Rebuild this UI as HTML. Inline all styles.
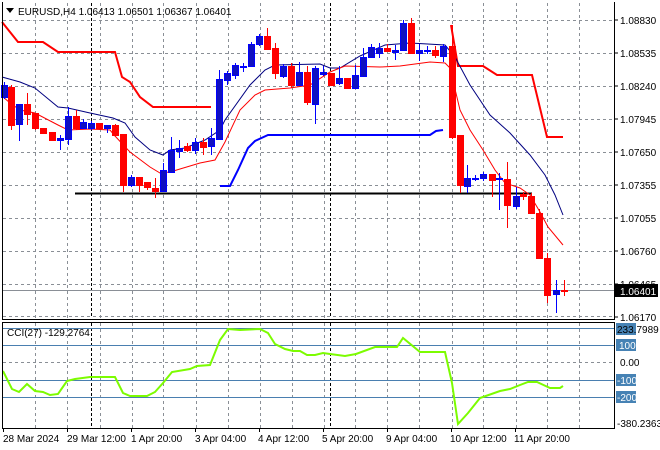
<!DOCTYPE html>
<html><head><meta charset="utf-8"><style>
html,body{margin:0;padding:0;background:#fff;width:660px;height:450px;overflow:hidden}
svg{display:block}
text{font-family:"Liberation Sans",sans-serif;font-size:10px;fill:#000}
</style></head><body>
<svg width="660" height="450" viewBox="0 0 660 450" xmlns="http://www.w3.org/2000/svg">
<rect width="660" height="450" fill="#fff"/>
<g stroke="#8a8f96" stroke-width="1" stroke-dasharray="3,3" fill="none">
<path d="M3 20.5H614M3 53.5H614M3 86.5H614M3 119.5H614M3 152.5H614M3 185.5H614M3 218.5H614M3 251.5H614M3 284.5H614M3 316.5H614"/>
<path d="M35.5 3V318M67.5 3V318M100.5 3V318M132.5 3V318M163.5 3V318M196.5 3V318M228.5 3V318M260.5 3V318M292.5 3V318M324.5 3V318M355.5 3V318M387.5 3V318M419.5 3V318M452.5 3V318M483.5 3V318M516.5 3V318M547.5 3V318M579.5 3V318"/>
<path d="M35.5 323V428M67.5 323V428M100.5 323V428M132.5 323V428M163.5 323V428M196.5 323V428M228.5 323V428M260.5 323V428M292.5 323V428M324.5 323V428M355.5 323V428M387.5 323V428M419.5 323V428M452.5 323V428M483.5 323V428M516.5 323V428M547.5 323V428M579.5 323V428"/>
<path d="M3 362.5H614"/>
</g>
<g stroke="#000" stroke-width="1" stroke-dasharray="3,2"><path d="M91.5 3V318M91.5 323V428M330.5 3V318M330.5 323V428"/></g>
<g stroke="#4a7fb0" stroke-width="1"><path d="M3 328.5H614M3 345.5H614M3 380.5H614M3 397.5H614"/></g>
<path d="M3 290.5H614" stroke="#8a8f96"/>
<path d="M75 193.5H532" stroke="#000" stroke-width="2"/>
<polyline fill="none" stroke="#ff0000" stroke-width="2" points="2,22 18,42 43,42 58,52 115,52 122,77 130,82 140,97 153,107 211,107"/>
<polyline fill="none" stroke="#ff0000" stroke-width="2" points="451,25 458,66 483,66 497,75 532,75 547,137 563,137"/>
<polyline fill="none" stroke="#0000ff" stroke-width="2" points="220,186 230,186 238,170 248,148 255,141 268,135 330,135 430,135 436,131 443,130"/>
<polyline fill="none" stroke="#000080" stroke-width="1" points="2,77 20,82 35,88 58,107 68,108 90,113 113,118 125,123 135,137 150,150 163,155 170,150 185,148 205,140 220,130 225,120 250,85 265,70 275,65 320,64 330,68 340,68 360,56 385,45 410,43 445,45 455,57 470,85 490,115 510,133 530,155 545,175 555,195 563,215"/>
<polyline fill="none" stroke="#ff0000" stroke-width="1" points="2,96 10,103 20,110 35,113 58,125 68,130 90,129 110,130 115,136 130,152 150,167 160,173 170,172 200,163 215,160 225,142 240,110 255,95 265,90 290,88 310,85 330,72 345,66 380,67 400,66 430,62 445,63 450,68 460,110 470,130 483,150 495,170 505,183 520,188 530,195 540,212 548,227 563,245"/>
<g stroke-width="1">
<g fill="#0000ff" stroke="#0000ff">
<path d="M4.5 82V99M19.5 104V141M60.5 135V150M68.5 107V145M83.5 119V128M91.5 121V130M107.5 125V133M131.5 175V187M163.5 163V191M171.5 137V172M179.5 140V158M195.5 138V154M211.5 128V155M219.5 70V139M227.5 71V85M235.5 63V79M243.5 63V72M251.5 42V66M259.5 34V46M283.5 64V78M299.5 62V85M315.5 66V124M323.5 66V76M339.5 66V85M355.5 65V89M363.5 48V77M371.5 44V58M379.5 43V58M395.5 45V60M403.5 20V51M419.5 44V61M427.5 46V54M443.5 44V62M467.5 165V193M475.5 175V181M483.5 172V181M499.5 173V210M516.5 187V209M556.5 280V313"/>
</g>
<g fill="#1010c0" stroke="#0000ff">
<rect x="1.5" y="85.5" width="6" height="12"/>
<rect x="16.5" y="104.5" width="6" height="20"/>
<rect x="57.5" y="138.5" width="6" height="2"/>
<rect x="65.5" y="116.5" width="6" height="23"/>
<rect x="80.5" y="122.5" width="6" height="6"/>
<rect x="88.5" y="123.5" width="6" height="5"/>
<rect x="104.5" y="125.5" width="6" height="3"/>
<rect x="128.5" y="177.5" width="6" height="8"/>
<rect x="160.5" y="170.5" width="6" height="21"/>
<rect x="168.5" y="150.5" width="6" height="22"/>
<rect x="176.5" y="148.5" width="6" height="3"/>
<rect x="192.5" y="142.5" width="6" height="8"/>
<rect x="208.5" y="138.5" width="6" height="8"/>
<rect x="216.5" y="79.5" width="6" height="60"/>
<rect x="224.5" y="73.5" width="6" height="7"/>
<rect x="232.5" y="65.5" width="6" height="10"/>
<rect x="240.5" y="66.5" width="6" height="1"/>
<rect x="248.5" y="44.5" width="6" height="22"/>
<rect x="256.5" y="36.5" width="6" height="8"/>
<rect x="280.5" y="66.5" width="6" height="10"/>
<rect x="296.5" y="72.5" width="6" height="13"/>
<rect x="312.5" y="68.5" width="6" height="36"/>
<rect x="320.5" y="72.5" width="6" height="2"/>
<rect x="336.5" y="78.5" width="6" height="5"/>
<rect x="352.5" y="75.5" width="6" height="13"/>
<rect x="360.5" y="57.5" width="6" height="19"/>
<rect x="368.5" y="47.5" width="6" height="10"/>
<rect x="376.5" y="48.5" width="6" height="5"/>
<rect x="392.5" y="50.5" width="6" height="2"/>
<rect x="400.5" y="23.5" width="6" height="27"/>
<rect x="416.5" y="50.5" width="6" height="3"/>
<rect x="424.5" y="50.5" width="6" height="1"/>
<rect x="440.5" y="46.5" width="6" height="10"/>
<rect x="464.5" y="178.5" width="6" height="8"/>
<rect x="472.5" y="178.5" width="6" height="1"/>
<rect x="480.5" y="174.5" width="6" height="4"/>
<rect x="496.5" y="178.5" width="6" height="1"/>
<rect x="513.5" y="196.5" width="6" height="10"/>
<rect x="553.5" y="290.5" width="6" height="4"/>
</g>
<g stroke="#ff0000" fill="#ff0000">
<path d="M11.5 85V130M27.5 93V125M35.5 113V130M52.5 132V141M76.5 110V130M99.5 123V128M115.5 124V135M123.5 134V192M139.5 177V192M147.5 182V190M155.5 178V198M187.5 143V152M203.5 138V155M267.5 28V49M275.5 43V79M291.5 63V88M307.5 66V105M331.5 73V85M347.5 78V88M387.5 44V51M411.5 18V54M435.5 46V58M452.5 25V139M460.5 135V193M492.5 174V197M507.5 162V228M523.5 192V200M531.5 193V214M539.5 209V258M547.5 253V303M564.5 280V296"/>
<rect x="8.5" y="87.5" width="6" height="38"/>
<rect x="24.5" y="104.5" width="6" height="10"/>
<rect x="32.5" y="113.5" width="6" height="15"/>
<rect x="40.5" y="128.5" width="6" height="5"/>
<rect x="49.5" y="132.5" width="6" height="8"/>
<rect x="73.5" y="116.5" width="6" height="12"/>
<rect x="96.5" y="123.5" width="6" height="5"/>
<rect x="112.5" y="125.5" width="6" height="10"/>
<rect x="120.5" y="134.5" width="6" height="51"/>
<rect x="136.5" y="177.5" width="6" height="8"/>
<rect x="144.5" y="182.5" width="6" height="5"/>
<rect x="152.5" y="188.5" width="6" height="3"/>
<rect x="184.5" y="146.5" width="6" height="4"/>
<rect x="200.5" y="142.5" width="6" height="5"/>
<rect x="264.5" y="36.5" width="6" height="13"/>
<rect x="272.5" y="48.5" width="6" height="25"/>
<rect x="288.5" y="66.5" width="6" height="19"/>
<rect x="304.5" y="72.5" width="6" height="30"/>
<rect x="328.5" y="73.5" width="6" height="12"/>
<rect x="344.5" y="78.5" width="6" height="10"/>
<rect x="384.5" y="48.5" width="6" height="3"/>
<rect x="408.5" y="23.5" width="6" height="30"/>
<rect x="432.5" y="50.5" width="6" height="5"/>
<rect x="449.5" y="46.5" width="6" height="91"/>
<rect x="457.5" y="135.5" width="6" height="50"/>
<rect x="489.5" y="174.5" width="6" height="6"/>
<rect x="504.5" y="179.5" width="6" height="26"/>
<rect x="520.5" y="194.5" width="6" height="2"/>
<rect x="528.5" y="196.5" width="6" height="17"/>
<rect x="536.5" y="213.5" width="6" height="45"/>
<rect x="544.5" y="258.5" width="6" height="37"/>
<rect x="561.5" y="290.5" width="6" height="1"/>
</g>
</g>
<polyline fill="none" stroke="#7cfc00" stroke-width="2" points="3,371 12,389 19,392 27,384 35,391 43,392 50,395 58,394 67,381 75,379 90,377 115,377 123,393 130,396 147,396 155,392 163,383 172,372 190,369 197,366 210,365 220,340 228,329 240,330 260,329 268,333 275,344 285,349 293,351 300,351 307,355 315,355 323,353 330,354 345,356 356,354 375,347 397,347 403,338 420,352 445,352 452,383 458,424 468,413 480,398 500,391 510,389 520,385 528,382 537,382 550,388 560,388 563,386"/>
<g stroke="#000" fill="none" stroke-width="1">
<path d="M2.5 2V319.5H614.5V2"/>
<path d="M2.5 322.5H614.5V428.5H2.5Z"/>
<path d="M614.5 20H618M614.5 53H618M614.5 86H618M614.5 119H618M614.5 152H618M614.5 185H618M614.5 218H618M614.5 251H618M614.5 284H618M614.5 317H618"/>
<path d="M3.5 428V432M67.5 428V432M131.5 428V432M195.5 428V432M259.5 428V432M323.5 428V432M387.5 428V432M451.5 428V432M515.5 428V432"/>
</g>
<path d="M6 8H14L10 13Z" fill="#000"/>
<text x="18" y="15">EURUSD,H4  1.06413 1.06501 1.06367 1.06401</text>
<text x="7" y="336">CCI(27) -129.2764</text>
<g>
<text x="620" y="24">1.08830</text>
<text x="620" y="57">1.08535</text>
<text x="620" y="90">1.08240</text>
<text x="620" y="123">1.07945</text>
<text x="620" y="156">1.07650</text>
<text x="620" y="189">1.07355</text>
<text x="620" y="222">1.07055</text>
<text x="620" y="255">1.06760</text>
<text x="620" y="288">1.06465</text>
<text x="620" y="321">1.06170</text>
<rect x="615" y="284" width="43" height="13" fill="#000"/>
<text x="620" y="295" style="fill:#fff">1.06401</text>
<rect x="616" y="323" width="20" height="12" fill="#4682b4"/>
<text x="617" y="333">233.7989</text>
<rect x="616" y="339" width="20" height="12" fill="#4682b4"/>
<text x="619" y="349" style="fill:#fff">100</text>
<text x="620" y="366">0.00</text>
<rect x="616" y="374" width="20" height="12" fill="#4682b4"/>
<text x="617" y="384" style="fill:#fff">-100</text>
<rect x="616" y="391" width="20" height="12" fill="#4682b4"/>
<text x="617" y="401" style="fill:#fff">-200</text>
<text x="617" y="427">-380.2363</text>
</g>
<g>
<text x="3" y="442">28 Mar 2024</text>
<text x="67" y="442">29 Mar 12:00</text>
<text x="131" y="442">1 Apr 20:00</text>
<text x="195" y="442">3 Apr 04:00</text>
<text x="258" y="442">4 Apr 12:00</text>
<text x="322" y="442">5 Apr 20:00</text>
<text x="386" y="442">9 Apr 04:00</text>
<text x="450" y="442">10 Apr 12:00</text>
<text x="514" y="442">11 Apr 20:00</text>
</g>
</svg>
</body></html>
